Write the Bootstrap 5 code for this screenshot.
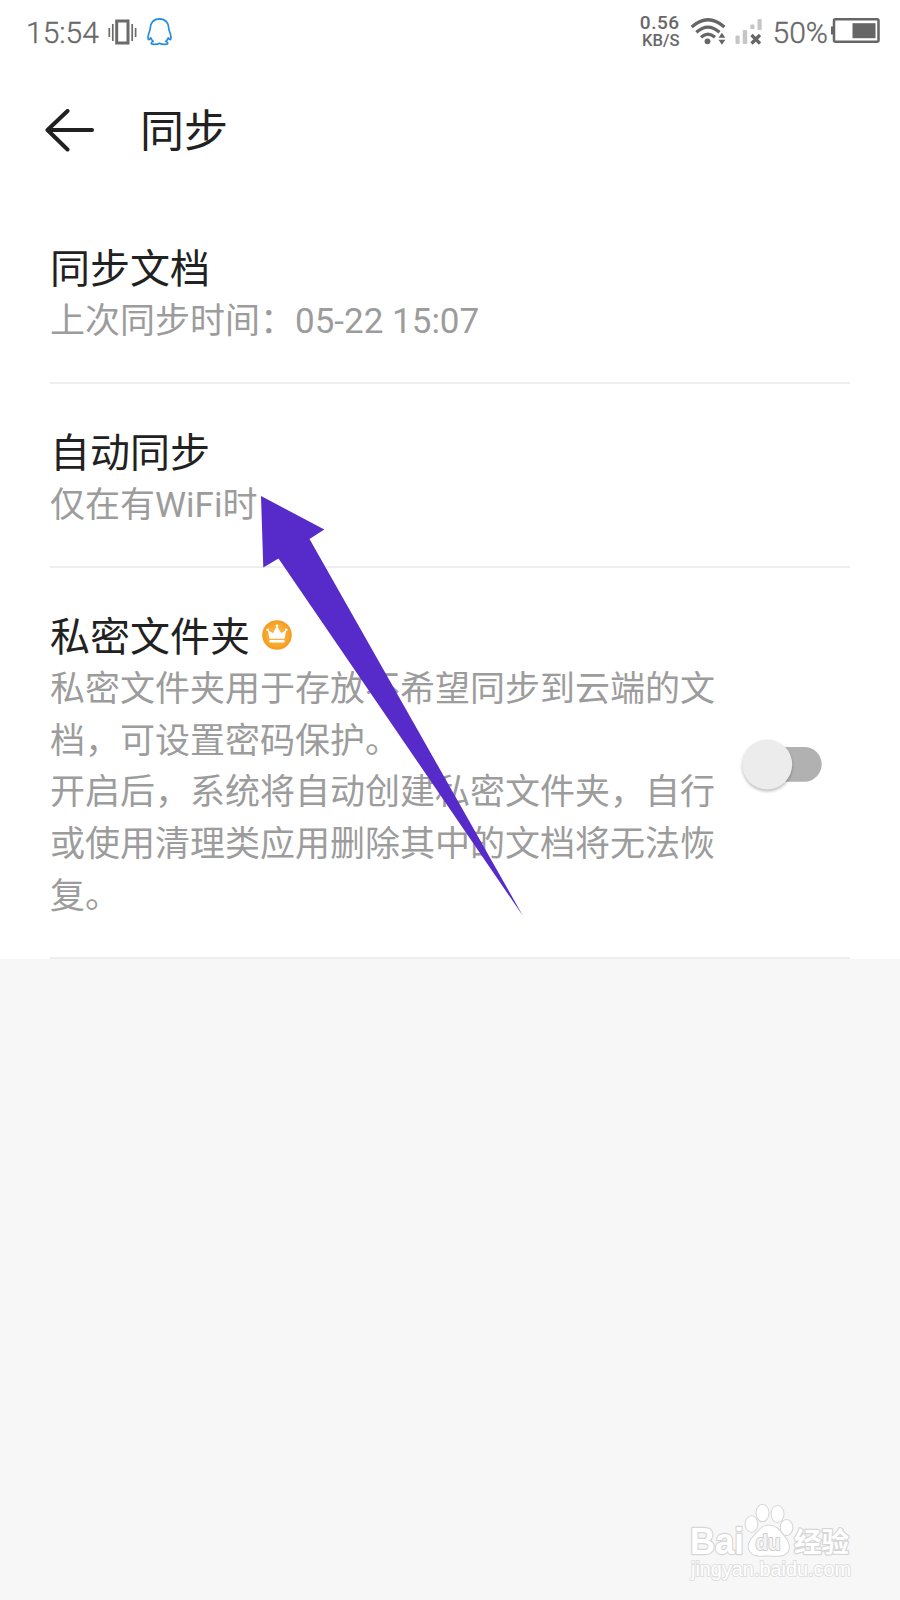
<!DOCTYPE html>
<html lang="zh-CN">
<head>
<meta charset="utf-8">
<meta name="viewport" content="width=device-width, initial-scale=1">
<title>同步</title>
<link href="https://cdn.jsdelivr.net/npm/bootstrap@5.3.0/dist/css/bootstrap.min.css" rel="stylesheet">
<style>
  body { font-family: Roboto, "Noto Sans CJK SC", sans-serif; background: #f7f7f7; color: #212121; }
  .screen { height: 1600px; overflow: hidden; }
  .status { height: 62px; padding: 1px 20px 0 26px; color: #686868; }
  .status-text { font-size: 30px; line-height: 36px; font-weight: 300; -webkit-text-stroke: .35px #686868; margin-top: 3px; }
  .speed { font-weight: 500; text-align: right; margin-right: 10px; }
  .speed-num { font-size: 19px; line-height: 17.5px; letter-spacing: .5px; }
  .speed-unit { font-size: 16.6px; line-height: 17px; }
  .percent { margin-left: 10px; }
  .battery { margin-left: 3px; }
  .appbar { height: 138px; padding: 0 45px; }
  .appbar h1 { font-size: 44px; line-height: 60px; font-weight: 400; margin: 2px 0 0 45px; }
  .item { margin: 0 50px; padding: 45px 0 34.6px; border-bottom: 2px solid #eee; }
  .item-title { font-size: 40px; line-height: 50px; font-weight: 400; margin: 0; height: 50.8px; }
  .item-desc { font-size: 35px; line-height: 51.7px; color: #9c9c9c; font-weight: 400; margin: 0; }
  .wrap-text { width: 670px; }
  .crown { margin-left: 12px; margin-top: -7px; }
  .toggle { margin: -4px 21px 0 0; }
  .pointer { left: 250px; top: 480px; pointer-events: none; }
  .watermark { left: 680px; top: 1496px; }
</style>
</head>
<body>
<div class="screen position-relative">
  <div class="bg-white">
    <header class="status d-flex align-items-center justify-content-between">
      <div class="d-flex align-items-center">
        <span class="status-text">15:54</span>
        <!-- vibrate mode -->
        <svg class="ms-2" width="30" height="28" viewBox="0 0 30 28" fill="none" stroke="#6b6b6b"><rect x="9.700" y="3" width="11.300" height="22" stroke-width="3"/><path d="M5.800 6v17M2.300 10v9M25.200 6v17M28.600 10v9" stroke-width="1.7"/></svg>
        <!-- penguin -->
        <svg class="ms-2" width="28" height="30" viewBox="0 0 28 30" fill="none" stroke="#2a8bd8" stroke-width="1.7" stroke-linejoin="round"><path d="M14.500 1.800C8.500 1.800 5.200 6 5.200 11.500C5.200 14 3 16.500 3 20.500C3 23 4 23.500 5.700 20.800C6.200 22.500 7 23.500 8.200 24.500C6 25 5.500 27 7.500 27.200C10.500 27.500 13 27.300 14.500 26.300C16 27.300 18.500 27.500 21.500 27.200C23.500 27 23 25 20.800 24.500C22 23.500 22.800 22.500 23.300 20.800C25 23.500 26 23 26 20.500C26 16.500 23.800 14 23.800 11.500C23.800 6 20.500 1.800 14.500 1.800Z"/></svg>
      </div>
      <div class="d-flex align-items-center">
        <div class="speed"><div class="speed-num">0.56</div><div class="speed-unit">KB/S</div></div>
        <!-- wifi -->
        <svg width="37" height="30" viewBox="0 0 37 30"><g fill="none" stroke="#666" stroke-width="3.200"><path d="M1.600 10Q18 -4.500 34.400 10"/><path d="M6.300 15.300Q18 5 29.500 15.300"/><path d="M11 20.300Q18 14 25 20.300"/></g><circle cx="17.500" cy="24.300" r="2.900" fill="#666"/><path d="M28.500 20.700l3.400-5 3.400 5zM28.500 22.700l3.400 5 3.400-5z" fill="#666"/></svg>
        <!-- mobile signal -->
        <svg width="28" height="30" viewBox="0 0 28 30" class="ms-2"><g fill="#c6c6c6"><rect x="0.500" y="18.500" width="4.200" height="8.500" rx="1"/><rect x="7.700" y="13" width="4.500" height="14" rx="1"/><rect x="15.300" y="7.500" width="4.200" height="4.500" rx="1"/><rect x="22.500" y="2" width="4.200" height="11" rx="1"/></g><path d="M16.500 18l8.500 8.500M25 18L16.500 26.500" stroke="#666" stroke-width="3.200"/></svg>
        <span class="status-text percent">50%</span>
        <!-- battery -->
        <svg class="battery" width="49" height="27" viewBox="2 0 49 27"><rect x="5" y="1.300" width="44.500" height="22.400" rx="1.500" fill="none" stroke="#666" stroke-width="2.500"/><rect x="2" y="8.500" width="3" height="8" fill="#666"/><rect x="23.500" y="5.200" width="23" height="15" fill="#666"/></svg>
      </div>
    </header>
    <div class="appbar d-flex align-items-center">
      <svg width="50" height="44" viewBox="0 0 50 44" fill="none" stroke="#212121" stroke-width="4" stroke-linecap="round" stroke-linejoin="round"><path d="M47 21H3M22.500 2L2.500 21L22.500 40.500"/></svg>
      <h1>同步</h1>
    </div>
    <section class="item"><h2 class="item-title">同步文档</h2><p class="item-desc">上次同步时间：05-22 15:07</p></section>
    <section class="item"><h2 class="item-title">自动同步</h2><p class="item-desc">仅在有WiFi时</p></section>
    <section class="item d-flex align-items-center justify-content-between">
      <div>
        <div class="d-flex align-items-center">
          <h2 class="item-title">私密文件夹</h2>
          <svg class="crown" width="30" height="30" viewBox="0 0 30 30"><defs><radialGradient id="gold"><stop offset=".5" stop-color="#fbb03c"/><stop offset="1" stop-color="#f49b1d"/></radialGradient></defs><circle cx="15" cy="15" r="14.800" fill="url(#gold)"/><path d="M7.500 18.800L5.800 10l5 3.200L15 6l4.200 7.200L24.200 10l-1.700 8.800z" fill="#fff"/><g fill="#fff"><circle cx="5.700" cy="9.700" r="1.300"/><circle cx="15" cy="5.800" r="1.400"/><circle cx="24.300" cy="9.700" r="1.300"/><rect x="7.300" y="20" width="15.400" height="2.600" rx="1"/></g></svg>
        </div>
        <p class="item-desc wrap-text">私密文件夹用于存放不希望同步到云端的文档，可设置密码保护。<br>开启后，系统将自动创建私密文件夹，自行或使用清理类应用删除其中的文档将无法恢复。</p>
      </div>
      <svg class="toggle flex-shrink-0" role="switch" aria-checked="false" width="90" height="60" viewBox="0 0 90 60"><rect x="20" y="11" width="62.700" height="34.700" rx="17.350" fill="#b1b1b1"/><circle cx="28.200" cy="28.500" r="25" fill="#ececec" style="filter:drop-shadow(0 2px 1.500px rgba(0,0,0,.25))"/></svg>
    </section>
  </div>

  <svg class="pointer position-absolute" width="290" height="450" viewBox="250 480 290 450"><path d="M261 496L324.300 529.500L309.500 539L523 916L278.500 558.500L263.300 567.500Z" fill="#562bc9"/></svg>

  <svg class="watermark position-absolute" width="190" height="90" viewBox="680 1495 190 90" fill="#fff" stroke="#d6d6d6" stroke-width="2.400" paint-order="stroke" stroke-linejoin="round">
    <text x="690" y="1553" font-family="Liberation Sans" font-weight="700" font-size="37" textLength="54" lengthAdjust="spacingAndGlyphs">Bai</text>
    <g stroke-width="2"><ellipse cx="751.500" cy="1523" rx="5.800" ry="7.800"/><ellipse cx="762.500" cy="1512" rx="6" ry="8.300"/><ellipse cx="777.500" cy="1513" rx="6" ry="8"/><ellipse cx="786.500" cy="1526.500" rx="5.800" ry="7.500"/>
    <path d="M768.500 1524.500C762 1524.500 759 1530 755 1534C749 1540 747 1545 750 1550C754 1556.500 762 1554.500 768.500 1554.500C776 1554.500 784 1556.500 788 1550C790.500 1545 788 1540 783 1534C779 1529 776 1524.500 768.500 1524.500Z"/></g>
    <text x="755.500" y="1549" font-family="Liberation Sans" font-weight="700" font-size="22" textLength="25" lengthAdjust="spacingAndGlyphs" fill="#f4f4f4" stroke-width="2" stroke="#cfcfcf">du</text>
    <text x="794" y="1551" font-family="Noto Sans CJK SC, sans-serif" font-weight="700" font-size="27.500">经验</text>
    <text x="691" y="1575" font-family="Liberation Sans" font-size="20" textLength="160" lengthAdjust="spacingAndGlyphs" stroke-width="2" stroke="#dfdfdf">jingyan.baidu.com</text>
  </svg>
</div>
<script src="https://cdn.jsdelivr.net/npm/bootstrap@5.3.0/dist/js/bootstrap.bundle.min.js"></script>
</body>
</html>
